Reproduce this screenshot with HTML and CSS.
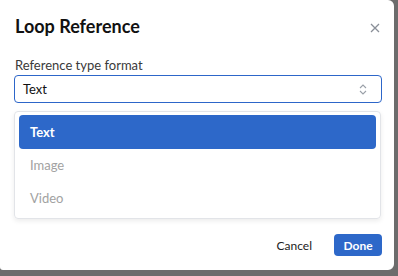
FILE: index.html
```html
<!DOCTYPE html>
<html lang="en">
<head>
    <meta charset="UTF-8">
    <meta name="viewport" content="width=device-width, initial-scale=1.0">
    <title>Loop Reference</title>
    <link rel="stylesheet" href="styles.css">
</head>
<body>
    <div class="dialog">
        <div class="dialog-header">
            <h2 class="dialog-title">Loop Reference</h2>
            <button class="close-btn" aria-label="Close">
                <svg width="10" height="10" viewBox="0 0 10 10">
                    <path d="M1 1 L9 9 M9 1 L1 9" stroke="#8a8f98" stroke-width="1.3" fill="none"/>
                </svg>
            </button>
        </div>
        <label class="field-label">Reference type format</label>
        <div class="select-box">
            <span>Text</span>
            <svg width="8" height="13" viewBox="0 0 8 13">
                <path d="M1 5 L4 2 L7 5 M1 8 L4 11 L7 8" stroke="#9aa0a8" stroke-width="1.1" fill="none"/>
            </svg>
        </div>
        <ul class="options">
            <li class="option selected">Text</li>
            <li class="option">Image</li>
            <li class="option">Video</li>
        </ul>
        <div class="dialog-footer">
            <button class="cancel-btn">Cancel</button>
            <button class="done-btn">Done</button>
        </div>
    </div>
</body>
</html>
```

FILE: styles.css
```css
body {
    margin: 0;
    background-color: #6c6c6c;
    font-family: Lato, "Noto Sans", sans-serif;
    height: 276px;
    overflow: hidden;
}

.dialog {
    width: 394px;
    height: 270px;
    box-sizing: border-box;
    padding: 12px 12px 0 14px;
    background-color: #ffffff;
    border-radius: 0 6px 6px 3px;
}

.dialog-header {
    display: flex;
    justify-content: space-between;
    align-items: center;
    height: 28px;
}

.dialog-title {
    margin: 0 0 0 1px;
    font-size: 18px;
    font-weight: 700;
    color: #111111;
}

.close-btn {
    background: none;
    border: none;
    padding: 0;
    margin-right: 2px;
    margin-top: 3px;
    display: flex;
}

.field-label {
    display: block;
    margin-top: 16px;
    margin-left: 1px;
    font-size: 13px;
    color: #3a3a3a;
    line-height: 18px;
}

.select-box {
    margin-top: 1px;
    height: 28px;
    box-sizing: border-box;
    border: 1px solid #2d66c9;
    border-radius: 4px;
    display: flex;
    align-items: center;
    justify-content: space-between;
    padding: 0 14px 0 8px;
    font-size: 13px;
    color: #111111;
}

.options {
    list-style: none;
    margin: 8px 1px 0 0;
    padding: 3px 4px;
    border: 1px solid #e2e4e8;
    border-radius: 4px;
    box-shadow: 0 2px 5px rgba(0, 0, 0, 0.08);
}

.option {
    height: 33px;
    line-height: 33px;
    padding-left: 11px;
    font-size: 13px;
    color: #a2a2a2;
}

.option.selected {
    height: 34px;
    line-height: 34px;
    background-color: #2d68c9;
    color: #ffffff;
    font-weight: 700;
    border-radius: 4px;
}

.dialog-footer {
    display: flex;
    justify-content: flex-end;
    align-items: center;
    gap: 22px;
    margin-top: 15px;
}

.cancel-btn {
    background: none;
    border: none;
    padding: 0;
    font-family: inherit;
    font-size: 12px;
    color: #222222;
}

.done-btn {
    width: 48px;
    height: 22px;
    background-color: #2d68c9;
    color: #ffffff;
    border: none;
    border-radius: 4px;
    font-family: inherit;
    font-size: 12px;
    font-weight: 700;
}
```
